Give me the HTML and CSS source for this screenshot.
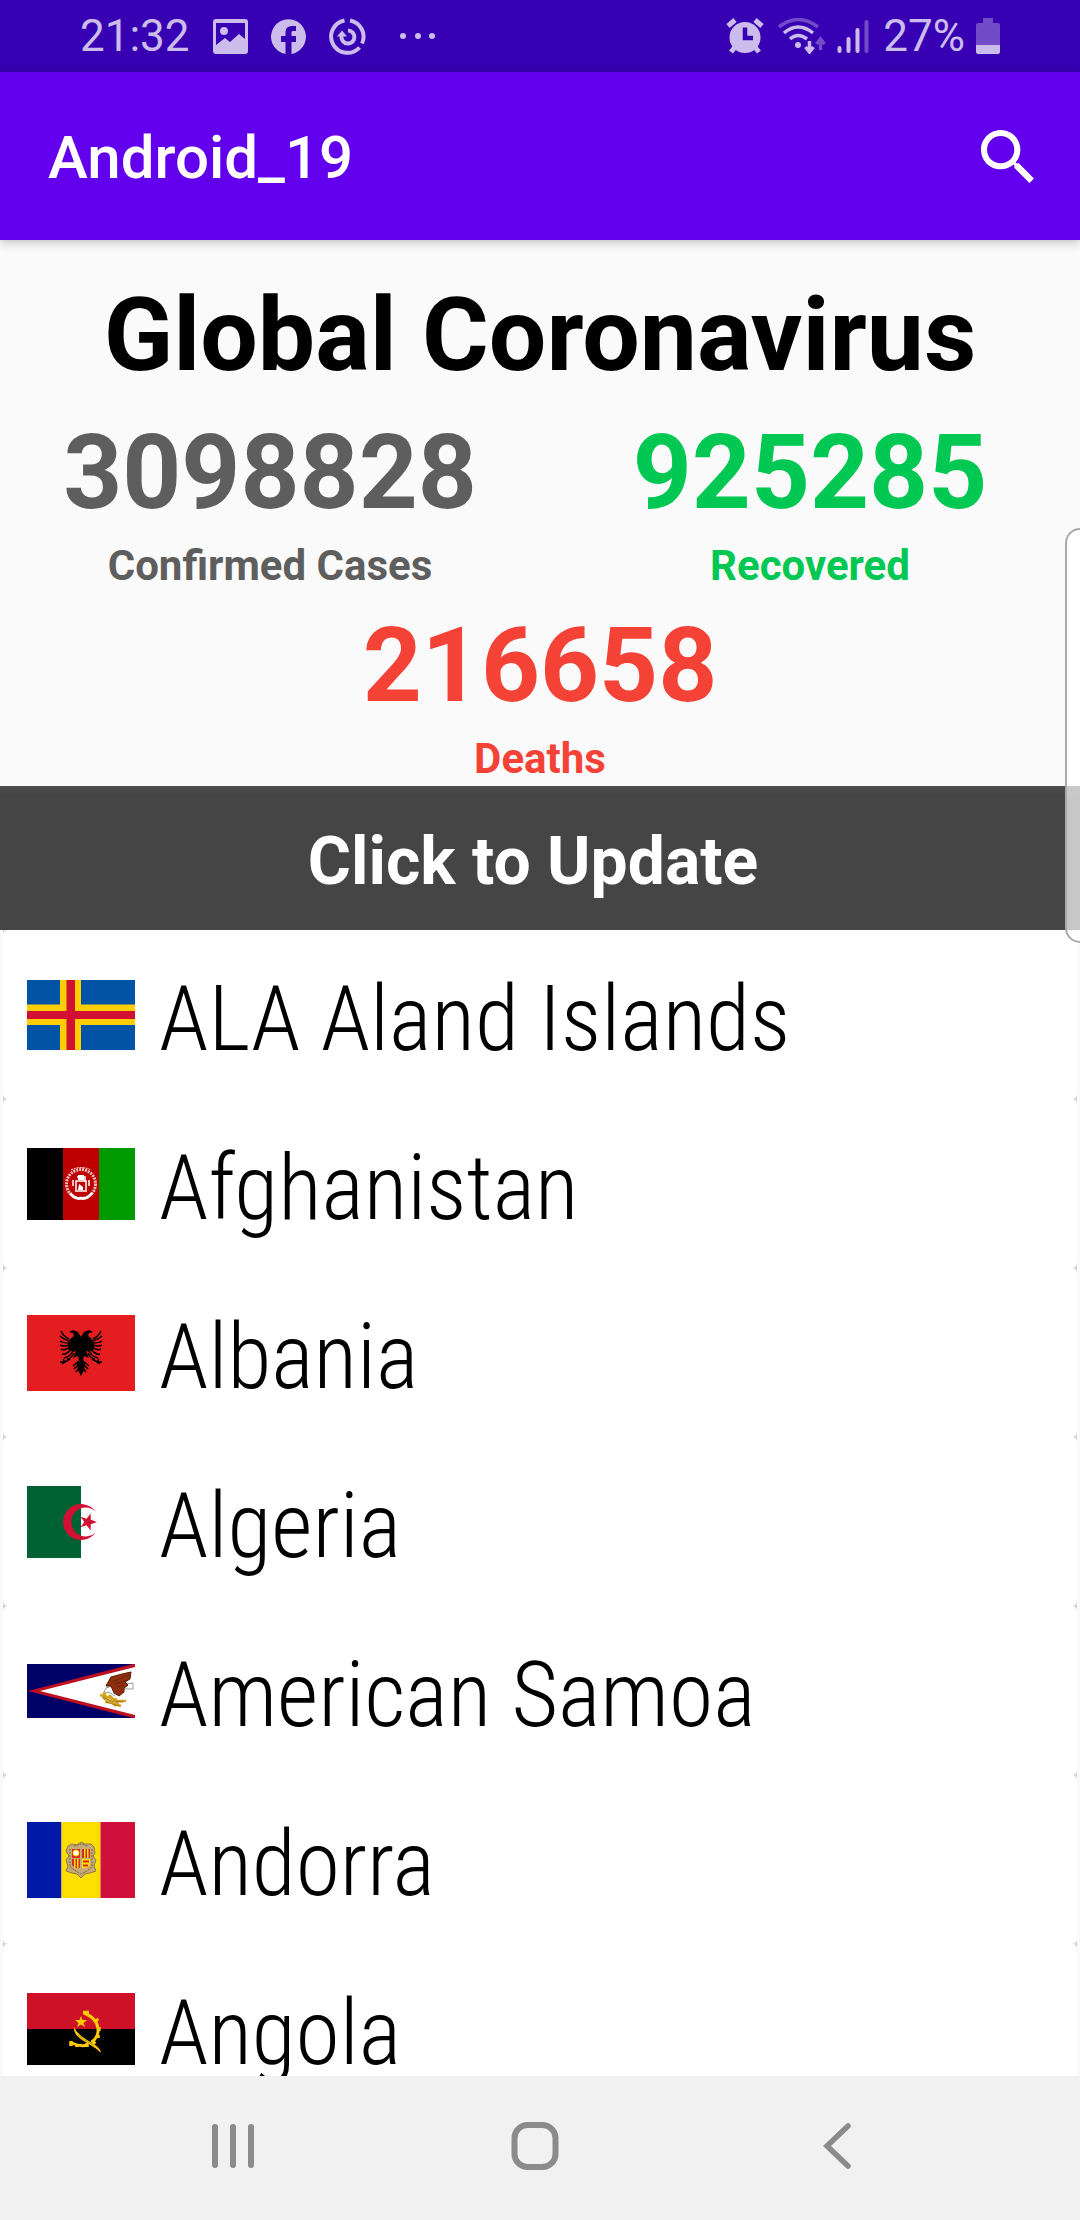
FILE: index.html
```html
<!DOCTYPE html>
<html lang="en">
<head>
<meta charset="utf-8">
<meta name="viewport" content="width=device-width, initial-scale=1">
<title>Android_19</title>
<link rel="stylesheet" href="styles.css">
</head>
<body>
<div class="status-bar">
  <div class="status-left">
    <span>21:32</span>
    <svg width="35" height="35" viewBox="0 0 35 35" fill="currentColor"><path fill-rule="evenodd" d="M3 0H32Q35 0 35 3V32Q35 35 32 35H3Q0 35 0 32V3Q0 0 3 0ZM3 4V26L12 19L17 23L26 15L32 20V4Z"/><circle cx="11" cy="12" r="4"/></svg>
    <svg width="35" height="35" viewBox="0 0 35 35" fill="currentColor"><path d="M14.500 35A17.500 17.500 0 1 1 20.500 35V23H25V17H20.500V13Q20.500 12 22 12H25V7H21Q14.500 7 14.500 13V17H10V23H14.500Z"/></svg>
    <svg class="sync-icon" width="37" height="37" viewBox="0 0 37 37" fill="none" stroke="currentColor" stroke-width="4"><path d="M15.500 2.500A16.300 16.300 0 1 0 30.500 29.500M21 2.500A16.300 16.300 0 0 1 33 25.500"/><path d="M12.500 18A6.500 6.500 0 1 0 19 12.500"/><path d="M8 18.500L13 12.500L18 18.500Z" fill="currentColor" stroke="none"/></svg>
    <svg width="37" height="8" viewBox="0 0 37 8" fill="currentColor"><circle cx="4" cy="4" r="3"/><circle cx="19" cy="4" r="3"/><circle cx="33" cy="4" r="3"/></svg>
  </div>
  <div class="status-right">
    <svg class="alarm-icon" width="38" height="36" viewBox="0 0 38 36"><g stroke="currentColor" stroke-width="5"><path d="M2 8L9 2M36 8L29 2M5 34L10 28M33 34L28 28"/></g><circle cx="19" cy="19.500" r="15.500" fill="currentColor"/><path d="M19 9.500V20H27" fill="none" stroke="#3700b3" stroke-width="4.500"/></svg>
    <svg width="48" height="36" viewBox="0 0 48 36" fill="none" stroke="currentColor" stroke-width="3.500"><path d="M1 9Q20 -6 40 9" opacity=".4"/><path d="M6 15Q20 3 35 15M12 21Q20 14 29 21"/><circle cx="20" cy="27" r="3" fill="currentColor" stroke="none"/><path d="M31.500 23V33M27.500 29L31.500 34L35.500 29"/><path d="M42.500 32V22M38.500 26L42.500 21L46.500 26" opacity=".4"/></svg>
    <svg class="signal-icon" width="32" height="36" viewBox="0 0 32 36" stroke="currentColor" stroke-width="4" stroke-linecap="round"><path d="M2.500 30V33M11.500 21V33M20.500 12V33"/><path d="M29.500 4V33" opacity=".4"/></svg>
    <span>27%</span>
    <svg width="24" height="36" viewBox="0 0 24 36" fill="currentColor"><path d="M7 0H17V5H22Q24 5 24 7V27H0V7Q0 5 2 5H7Z" opacity=".4"/><path d="M0 27H24V34Q24 36 22 36H2Q0 36 0 34Z"/></svg>
  </div>
</div>
<header class="app-bar">
  <h1 class="app-title">Android_19</h1>
  <button class="search-button" type="button" aria-label="Search">
    <svg width="53" height="53" viewBox="3 3 17.500 17.500" fill="currentColor"><path d="M15.500 14h-.79l-.28-.27C15.410 12.590 16 11.110 16 9.500 16 5.910 13.090 3 9.500 3S3 5.910 3 9.500 5.910 16 9.500 16c1.610 0 3.090-.59 4.230-1.570l.27.28v.79l5 4.990L20.490 19l-4.990-5zm-6 0C7.010 14 5 11.990 5 9.500S7.010 5 9.500 5 14 7.010 14 9.500 11.990 14 9.500 14z"/></svg>
  </button>
</header>
<main class="content">
  <section class="summary">
    <h2 class="headline">Global Coronavirus</h2>
    <div class="stats">
      <div class="stat confirmed"><p class="stat-value">3098828</p><p class="stat-label">Confirmed Cases</p></div>
      <div class="stat recovered"><p class="stat-value">925285</p><p class="stat-label">Recovered</p></div>
      <div class="stat deaths"><p class="stat-value">216658</p><p class="stat-label">Deaths</p></div>
    </div>
  </section>
  <button class="update-button" type="button">Click to Update</button>
  <ul class="countries">
    <li class="country">
      <svg class="flag" viewBox="0 0 108 70"><path fill="#0053a5" d="M0 0H108V70H0Z"/><path fill="#ffce00" d="M33 0H54V24.500H108V45H54V70H33V45H0V24.500H33Z"/><path fill="#d21034" d="M39.500 0H48V31H108V39H48V70H39.500V39H0V31H39.500Z"/></svg>
      <span class="country-name">ALA Aland Islands</span>
    </li>
    <li class="country">
      <svg class="flag" viewBox="0 0 108 72"><path d="M0 0H36V72H0Z"/><path fill="#bf0000" d="M36 0H72V72H36Z"/><path fill="#009900" d="M72 0H108V72H72Z"/><g fill="none" stroke="#fff"><circle cx="54" cy="36" r="14.500" stroke-width="3" stroke-dasharray="2 1" opacity=".75"/><path d="M43 45Q48 52 54 50Q60 52 65 45" stroke-width="2.500"/><path d="M44 22Q54 17 64 22" stroke-width="1" stroke-dasharray="2 1"/><path d="M46 32V38M62 32V38M50 29H58V34M49 42V33H59V42M48 43H60" stroke-width="1.500"/></g><path fill="#fff" d="M51 27H57V32H51ZM52 36L56 39V42H51Z"/></svg>
      <span class="country-name">Afghanistan</span>
    </li>
    <li class="country">
      <svg class="flag" viewBox="0 0 108 76"><path fill="#e41e20" d="M0 0H108V76H0Z"/><path d="M54 22L51 17L46 15L42 17L46 18L47 21L43 24L41 29V34L46 37L49 36L46 43L51 41L52 45L50 48L51 55L54 61L57 55L58 48L56 45L57 41L62 43L59 36L62 37L67 34V29L65 24L61 21L62 18L66 17L62 15L57 17Z"/><g fill="none" stroke="#000" stroke-width="1.500"><path d="M42 24Q36 21 34 16M42 26Q36 24 33 21M42 28Q36 28 33 26M42 30Q37 32 33 30M43 32Q38 36 34 34M44 34Q40 40 35 39M46 36Q43 42 37 43M47 38Q44 44 40 44M33 47H38L43 44M35 49L38 47L36 44M52 46L46 51M52 49L47 54M53 52L49 57"/><path d="M66 24Q72 21 74 16M66 26Q72 24 75 21M66 28Q72 28 75 26M66 30Q71 32 75 30M65 32Q70 36 74 34M64 34Q68 40 73 39M62 36Q65 42 71 43M61 38Q64 44 68 44M75 47H70L65 44M73 49L70 47L72 44M56 46L62 51M56 49L61 54M55 52L59 57"/></g></svg>
      <span class="country-name">Albania</span>
    </li>
    <li class="country">
      <svg class="flag" viewBox="0 0 108 72"><path fill="#fff" d="M54 0H108V72H54Z"/><path fill="#006233" d="M0 0H54V72H0Z"/><path fill="#d21034" d="M69 26A18 18 0 1 0 69 46A14.400 14.400 0 1 1 69 26ZM70 36L63.800 38.200L63.600 44.500L59.600 39.300L53.500 41.200L57.300 36L53.500 30.800L59.600 32.700L63.600 27.500L63.800 33.800Z"/></svg>
      <span class="country-name">Algeria</span>
    </li>
    <li class="country">
      <svg class="flag" viewBox="0 0 108 54"><path fill="#006" d="M0 0H108V54H0Z"/><path fill="#bd1021" d="M1 27L106 0H108V54H106Z"/><path fill="#fff" d="M13 27L108 3V51Z"/><path fill="#fff" stroke="#999" d="M85 22L79 24L76 30L82 28L88 32M98 20L106 19V25L98 25Z"/><path fill="#8f2f0c" stroke="#5b1b08" d="M80 20L84 13L95 10L104 8L103 15L98 18L101 21L97 24V28L92 32L87 29L84 22L79 22Z"/><path fill="none" stroke="#6d210c" d="M86 18L103 10M88 20L100 16M90 23L97 21"/><g fill="none" stroke="#d7a51d" stroke-width="2.500"><path d="M73 31L81 33L90 37L99 37M77 28L79 34M76 34L84 38L94 42M78 38H85L89 42M88 34L91 40M82 31L87 36"/></g><path fill="none" stroke="#8c6614" stroke-width=".8" d="M75 33L85 37L96 38M79 38L92 42"/></svg>
      <span class="country-name">American Samoa</span>
    </li>
    <li class="country">
      <svg class="flag" viewBox="0 0 108 76"><path fill="#0018a8" d="M0 0H34.500V76H0Z"/><path fill="#ffdf00" d="M34.500 0H73.500V76H34.500Z"/><path fill="#d0103a" d="M73.500 0H108V76H73.500Z"/><path fill="#c6aa76" stroke="#8f7746" d="M54 20L58 22L64 22L67 25L68 31L66 34L69 38L67 44L69 49L63 51L58 52L54 56L50 52L45 51L39 49L41 44L39 38L42 34L39 29L41 24L45 22L50 23Z"/><path fill="#d52b1e" d="M45 27H53V36H45ZM55 27H63V36H55ZM45 37H53V46H48L45 43Z"/><path fill="#ffdf00" d="M55 37H63V43L60 46H55ZM57 27H58.500V36H57ZM60 27H61.500V36H60ZM47 37H48.500V46H47ZM50 37H51.500V46H50Z"/><circle cx="49" cy="31" r="3" fill="#fff" stroke="#ffdf00"/><path stroke="#d52b1e" stroke-width="1.800" d="M56 39.500H62M56 43.500H61"/><path fill="none" stroke="#7b6740" stroke-dasharray="2 1" d="M43 27L43 45L49 49L54 52L60 49L65 45V27M47 24L54 22L61 24"/></svg>
      <span class="country-name">Andorra</span>
    </li>
    <li class="country">
      <svg class="flag" viewBox="0 0 108 72"><path fill="#ce1126" d="M0 0H108V36H0Z"/><path d="M0 36H108V72H0Z"/><g fill="none" stroke="#ffcb00"><path d="M57 20Q72 26 71 39Q70 45 65 49M45 50Q53 54 61 52" stroke-width="3"/><path d="M56 19.500H62M69 26L71 28M72 34V38M71 42V45M65 47L68 51M44 48V53M50 51V54M60 50V54" stroke-width="3.500"/></g><path fill="#ffcb00" d="M47 34Q51 42 60 47Q72 53 74 59Q73 60 71 57Q64 52 55 47Q46 41 47 34ZM54 23L55.500 27H60L56.500 30L58 34L54 31.500L50 34L51.500 30L48 27H52.500Z"/><path fill="none" stroke="#76610b" stroke-width=".8" stroke-dasharray="2 1" d="M51 42Q58 48 67 52"/></svg>
      <span class="country-name">Angola</span>
    </li>
  </ul>
</main>
<nav class="nav-bar">
  <button type="button" aria-label="Recent apps"><svg width="48" height="48" viewBox="0 0 48 48" stroke="currentColor" stroke-width="6" stroke-linecap="round"><path d="M6 5V43M24 5V43M42 5V43"/></svg></button>
  <button type="button" aria-label="Home"><svg width="48" height="48" viewBox="0 0 48 48" fill="none" stroke="currentColor" stroke-width="6"><rect x="3.500" y="3" width="41" height="42" rx="13"/></svg></button>
  <button type="button" aria-label="Back"><svg width="48" height="48" viewBox="0 0 48 48" fill="none" stroke="currentColor" stroke-width="5.500" stroke-linecap="round"><path d="M35 4L14 24L35 44"/></svg></button>
</nav>
<div class="edge-handle"></div>
</body>
</html>
```
FILE: styles.css
```css
* {
  box-sizing: border-box;
  margin: 0;
  padding: 0;
}

body {
  display: flex;
  flex-direction: column;
  height: 100vh;
  overflow: hidden;
  background: #fafafa;
  font-family: Roboto, "Liberation Sans", sans-serif;
}

button {
  border: 0;
  background: none;
  color: inherit;
  font: inherit;
}

svg {
  display: block;
  flex: none;
}

.status-bar {
  display: flex;
  flex: none;
  justify-content: space-between;
  height: 72px;
  padding: 0 80px;
  background: #3700b3;
  color: #cbbcec;
  font-size: 44px;
  line-height: 72px;
}

.status-left,
.status-right {
  display: flex;
  align-items: center;
}

.status-left {
  gap: 23px;
}

.sync-icon {
  margin-right: 10px;
}

.status-right {
  gap: 11px;
}

.alarm-icon,
.signal-icon {
  margin-right: 3px;
}

.app-bar {
  display: flex;
  flex: none;
  align-items: center;
  justify-content: space-between;
  height: 168px;
  padding: 0 46px 0 48px;
  background: #6200ee;
  color: #fff;
  box-shadow: 0 2px 10px rgba(0, 0, 0, 0.25);
}

.app-title {
  padding-top: 4px;
  font-size: 60px;
  font-weight: 500;
  line-height: 80px;
}

.content {
  display: flex;
  flex: 1;
  flex-direction: column;
  min-height: 0;
}

.summary {
  flex: none;
  padding-top: 23px;
  text-align: center;
}

.headline,
.stat-value {
  padding-top: 8px;
  font-weight: 700;
  line-height: 129px;
}

.headline {
  color: #000;
  font-size: 102px;
}

.stat-value {
  font-size: 103px;
}

.stats {
  display: flex;
  flex-wrap: wrap;
}

.stat {
  flex: 1 0 50%;
}

.stat-label {
  padding: 3px 0 1px;
  font-size: 42px;
  font-weight: 700;
  line-height: 52px;
}

.confirmed {
  color: #5e5e5e;
}

.recovered {
  color: #00c853;
}

.deaths {
  color: #f44336;
}

.update-button {
  flex: none;
  height: 144px;
  padding: 6px 14px 0 0;
  background: linear-gradient(#4d4d4d, #454545 10px);
  color: #fff;
  font-size: 66px;
  font-weight: 700;
}

.countries {
  flex: 1;
  min-height: 0;
  padding: 0 3px;
  overflow: hidden;
  background: linear-gradient(90deg, #fafafa 3px, #d4d4d4 3px, #d4d4d4 calc(100% - 3px), #fafafa calc(100% - 3px));
  list-style: none;
}

.country {
  display: flex;
  align-items: center;
  gap: 24px;
  height: 169px;
  padding-left: 24px;
  border-radius: 5px;
  background: #fff;
}

.flag {
  width: 108px;
}

.country-name {
  padding-top: 10px;
  color: #000;
  font-family: "Roboto Condensed", Roboto, "Liberation Sans", sans-serif;
  font-size: 90px;
  font-weight: 300;
  line-height: 120px;
}

.nav-bar {
  display: flex;
  flex: none;
  height: 144px;
  padding: 0 92px 4px 82px;
  background: #f1f1f1;
  color: #8b8b8b;
}

.nav-bar button {
  display: flex;
  flex: 1;
  align-items: center;
  justify-content: center;
}

.edge-handle {
  position: absolute;
  top: 528px;
  right: 0;
  width: 15px;
  height: 415px;
  border: 2px solid #aaa;
  border-right: 0;
  border-radius: 18px 0 0 18px;
  background: rgba(255, 255, 255, 0.7);
}
```
